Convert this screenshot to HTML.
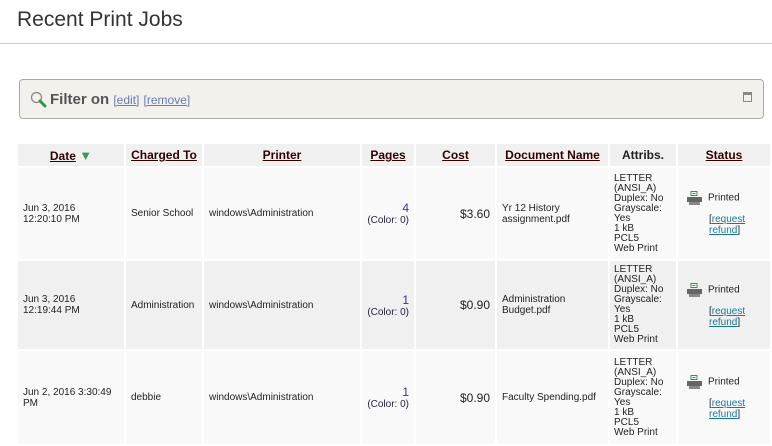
<!DOCTYPE html>
<html><head><meta charset="utf-8"><style>
body{margin:0;width:772px;height:444px;overflow:hidden;background:#fff;font-family:"Liberation Sans",Arial,sans-serif;color:#222;position:relative}
h1{position:absolute;left:17px;top:8px;margin:0;font-weight:normal;font-size:21px;color:#333}
.hr{position:absolute;left:0;top:43px;width:772px;height:1px;background:#ccc}
.filter{position:absolute;left:19px;top:79px;width:743px;height:38px;border:1px solid #aaa;border-radius:4px;background:#f2f1ec}
.filter .t{position:absolute;left:30px;top:11px;font-size:15px;font-weight:bold;color:#555}
.filter .l{font-size:12px;font-weight:normal;color:#6a7bb3;text-decoration:underline}
.filter .mini{position:absolute;right:11px;top:12px;width:7px;height:6px;border:1px solid #888;border-top-width:3px;background:#f2f1ec}
table{position:absolute;left:16px;top:142px;border-spacing:2px;border-collapse:separate;table-layout:fixed}
td,th{padding:0 5px;font-size:10px;vertical-align:middle}
th{background:#f0f0f0;height:22px;font-size:12px;font-weight:bold;text-align:center;padding:0}
th a{color:#300;text-decoration:underline}
tr.r1 td{background:#f9f9f9;height:91px}
tr.r2 td{background:#f0f0f0;height:88px}
tr.r3 td{background:#f9f9f9;height:93px}
.pg{text-align:right;color:#224}
.pg b{font-weight:normal;font-size:12px;color:#33a}
.cost{text-align:right;font-size:12px}
.att{font-size:10px;line-height:10px;padding:0 4px}
.st a{color:#1a7a96;text-decoration:underline}
.pr{display:inline-block;vertical-align:middle;margin-right:6px}
</style></head><body>
<h1>Recent Print Jobs</h1>
<div class="hr"></div>
<div class="filter">
<svg style="position:absolute;left:10px;top:11px" width="17" height="17" viewBox="0 0 17 17"><circle cx="6.5" cy="6.5" r="5" fill="none" stroke="#888" stroke-width="1.3"/><path d="M10 10 L15 15" stroke="#2a9a4a" stroke-width="3" stroke-linecap="round"/></svg>
<div class="t">Filter on <span class="l">[edit]</span> <span class="l">[remove]</span></div>
<div class="mini"></div>
</div>
<table>
<colgroup><col style="width:106px"><col style="width:76px"><col style="width:156px"><col style="width:52px"><col style="width:79px"><col style="width:111px"><col style="width:66px"><col style="width:92px"></colgroup>
<tr><th><a>Date</a> <span style="color:#3a9a5a;font-size:13px">▼</span></th><th><a>Charged To</a></th><th><a>Printer</a></th><th><a>Pages</a></th><th><a>Cost</a></th><th><a>Document Name</a></th><th>Attribs.</th><th><a>Status</a></th></tr>
<tr class="r1"><td>Jun 3, 2016<br>12:20:10 PM</td><td>Senior School</td><td>windows\Administration</td><td class="pg"><b>4</b><br>(Color: 0)</td><td class="cost">$3.60</td><td>Yr 12 History assignment.pdf</td><td class="att">LETTER (ANSI_A)<br>Duplex: No<br>Grayscale: Yes<br>1 kB<br>PCL5<br>Web Print</td><td class="st"></td></tr>
<tr class="r2"><td>Jun 3, 2016<br>12:19:44 PM</td><td>Administration</td><td>windows\Administration</td><td class="pg"><b>1</b><br>(Color: 0)</td><td class="cost">$0.90</td><td>Administration Budget.pdf</td><td class="att">LETTER (ANSI_A)<br>Duplex: No<br>Grayscale: Yes<br>1 kB<br>PCL5<br>Web Print</td><td class="st"></td></tr>
<tr class="r3"><td>Jun 2, 2016 3:30:49 PM</td><td>debbie</td><td>windows\Administration</td><td class="pg"><b>1</b><br>(Color: 0)</td><td class="cost">$0.90</td><td>Faculty Spending.pdf</td><td class="att">LETTER (ANSI_A)<br>Duplex: No<br>Grayscale: Yes<br>1 kB<br>PCL5<br>Web Print</td><td class="st"></td></tr>
</table>
<script>
document.querySelectorAll('.st').forEach(function(td){td.innerHTML='<div style="padding-left:4px"><svg class="pr" width="15" height="14" viewBox="0 0 15 14"><rect x="4" y="0.5" width="6" height="4" fill="#fff" stroke="#2a9a4a"/><line x1="5.5" y1="2.5" x2="8.5" y2="2.5" stroke="#2a9a4a"/><rect x="0" y="6" width="15" height="5" fill="#666"/><rect x="2" y="11" width="11" height="3" fill="#888"/></svg><span>Printed</span><div style="margin:9px 0 0 22px;line-height:11px">[<a>request<br>refund</a>]</div></div>';});
</script>
</body></html>
